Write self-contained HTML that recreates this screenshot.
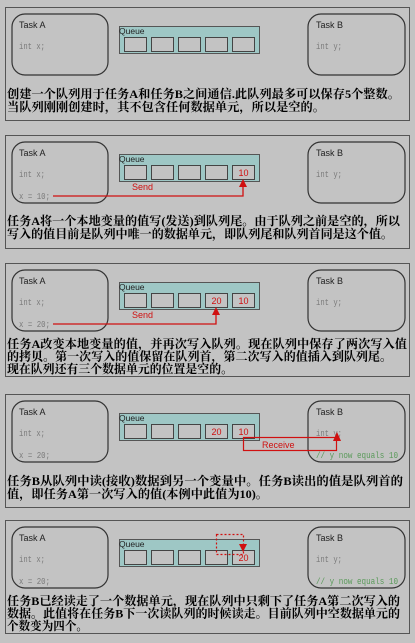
<!DOCTYPE html>
<html><head><meta charset="utf-8"><style>
html,body{margin:0;padding:0;background:#c3c3c3;width:415px;height:643px;overflow:hidden}
svg{display:block}
.t{font-family:"Liberation Sans",sans-serif;font-size:9px;fill:#222}
.c{font-family:"Liberation Mono",monospace;font-size:9px;fill:#7a7a7a}
.g{font-family:"Liberation Mono",monospace;font-size:9px;fill:#5a9a5a}
.r{font-family:"Liberation Sans",sans-serif;font-size:9px;fill:#d01010}
.z{font-family:"Liberation Serif","Noto Serif CJK SC","Noto Sans CJK SC",serif;font-size:12px;fill:#000;font-weight:bold}
</style></head><body>
<svg width="415" height="643" viewBox="0 0 415 643" xmlns="http://www.w3.org/2000/svg">
<defs>
<g id="base">
  <rect x="5.5" y="0.5" width="404" height="113" fill="none" stroke="#555" stroke-width="1"/>
  <rect x="12" y="7" width="96" height="61" rx="13" fill="none" stroke="#333" stroke-width="1.2"/>
  <rect x="308" y="7" width="97" height="61" rx="13" fill="none" stroke="#333" stroke-width="1.2"/>
  <text class="t" x="19" y="21">Task A</text>
  <text class="t" x="316" y="21">Task B</text>
  <text class="c" x="19" y="42" textLength="26" lengthAdjust="spacingAndGlyphs">int x;</text>
  <text class="c" x="316" y="42" textLength="26" lengthAdjust="spacingAndGlyphs">int y;</text>
  <rect x="119.5" y="19.5" width="140" height="27" fill="#9ec7c5" stroke="#555"/>
  <text class="t" x="119" y="27" style="font-size:8.5px">Queue</text>
  <rect x="124.5" y="30.5" width="22" height="14" fill="#c3c3c3" stroke="#444"/>
  <rect x="151.5" y="30.5" width="22" height="14" fill="#c3c3c3" stroke="#444"/>
  <rect x="178.5" y="30.5" width="22" height="14" fill="#c3c3c3" stroke="#444"/>
  <rect x="205.5" y="30.5" width="22" height="14" fill="#c3c3c3" stroke="#444"/>
  <rect x="232.5" y="30.5" width="22" height="14" fill="#c3c3c3" stroke="#444"/>
</g>
</defs>

<g transform="translate(0,7)">
  <use href="#base"/>
  <text class="z" x="7" y="91" textLength="393" lengthAdjust="spacingAndGlyphs">创建一个队列用于任务A和任务B之间通信.此队列最多可以保存5个整数。</text>
  <text class="z" x="7" y="104" textLength="318" lengthAdjust="spacingAndGlyphs">当队列刚刚创建时，其不包含任何数据单元，所以是空的。</text>
</g>

<g transform="translate(0,135)">
  <use href="#base"/>
  <text class="c" x="19" y="64" textLength="31" lengthAdjust="spacingAndGlyphs">x = 10;</text>
  <text class="r" x="243.5" y="41" text-anchor="middle">10</text>
  <polyline points="53,61 243,61 243,51" fill="none" stroke="#d01010" stroke-width="1.3"/>
  <polygon points="243,44 239,52 247,52" fill="#d01010"/>
  <text class="r" x="132" y="55">Send</text>
  <text class="z" x="7" y="90" textLength="393" lengthAdjust="spacingAndGlyphs">任务A将一个本地变量的值写(发送)到队列尾。由于队列之前是空的，所以</text>
  <text class="z" x="7" y="103" textLength="386" lengthAdjust="spacingAndGlyphs">写入的值目前是队列中唯一的数据单元，即队列尾和队列首同是这个值。</text>
</g>

<g transform="translate(0,263)">
  <use href="#base"/>
  <text class="c" x="19" y="64" textLength="31" lengthAdjust="spacingAndGlyphs">x = 20;</text>
  <text class="r" x="216.5" y="41" text-anchor="middle">20</text>
  <text class="r" x="243.5" y="41" text-anchor="middle">10</text>
  <polyline points="53,61 216,61 216,51" fill="none" stroke="#d01010" stroke-width="1.3"/>
  <polygon points="216,44 212,52 220,52" fill="#d01010"/>
  <text class="r" x="132" y="55">Send</text>
  <text class="z" x="7" y="85" textLength="400" lengthAdjust="spacingAndGlyphs">任务A改变本地变量的值，并再次写入队列。现在队列中保存了两次写入值</text>
  <text class="z" x="7" y="97.5" textLength="385" lengthAdjust="spacingAndGlyphs">的拷贝。第一次写入的值保留在队列首，第二次写入的值插入到队列尾。</text>
  <text class="z" x="7" y="110" textLength="226" lengthAdjust="spacingAndGlyphs">现在队列还有三个数据单元的位置是空的。</text>
</g>

<g transform="translate(0,394)">
  <use href="#base"/>
  <text class="c" x="19" y="64" textLength="31" lengthAdjust="spacingAndGlyphs">x = 20;</text>
  <text class="r" x="216.5" y="41" text-anchor="middle">20</text>
  <text class="r" x="243.5" y="41" text-anchor="middle">10</text>
  <rect x="243.5" y="43.5" width="93" height="13" fill="none" stroke="#d01010" stroke-width="1.2"/>
  <polygon points="337,38 333,47 341,47" fill="#d01010"/>
  <text class="r" x="262" y="54">Receive</text>
  <text class="g" x="316" y="64" textLength="82" lengthAdjust="spacingAndGlyphs">// y now equals 10</text>
  <text class="z" x="7" y="91" textLength="396" lengthAdjust="spacingAndGlyphs">任务B从队列中读(接收)数据到另一个变量中。任务B读出的值是队列首的</text>
  <text class="z" x="7" y="104" textLength="261" lengthAdjust="spacingAndGlyphs">值，即任务A第一次写入的值(本例中此值为10)。</text>
</g>

<g transform="translate(0,520)">
  <use href="#base"/>
  <text class="c" x="19" y="64" textLength="31" lengthAdjust="spacingAndGlyphs">x = 20;</text>
  <text class="r" x="243.5" y="41" text-anchor="middle">20</text>
  <text class="g" x="316" y="64" textLength="82" lengthAdjust="spacingAndGlyphs">// y now equals 10</text>
  <rect x="216.5" y="14.5" width="27" height="20" fill="none" stroke="#d01010" stroke-width="1.2" stroke-dasharray="2,2"/>
  <polygon points="243,32 239,24 247,24" fill="#d01010"/>
  <text class="z" x="7" y="85" textLength="393" lengthAdjust="spacingAndGlyphs">任务B已经读走了一个数据单元，现在队列中只剩下了任务A第二次写入的</text>
  <text class="z" x="7" y="97.5" textLength="393" lengthAdjust="spacingAndGlyphs">数据。此值将在任务B下一次读队列的时候读走。目前队列中空数据单元的</text>
  <text class="z" x="7" y="110" textLength="81" lengthAdjust="spacingAndGlyphs">个数变为四个。</text>
</g>
</svg>
</body></html>
